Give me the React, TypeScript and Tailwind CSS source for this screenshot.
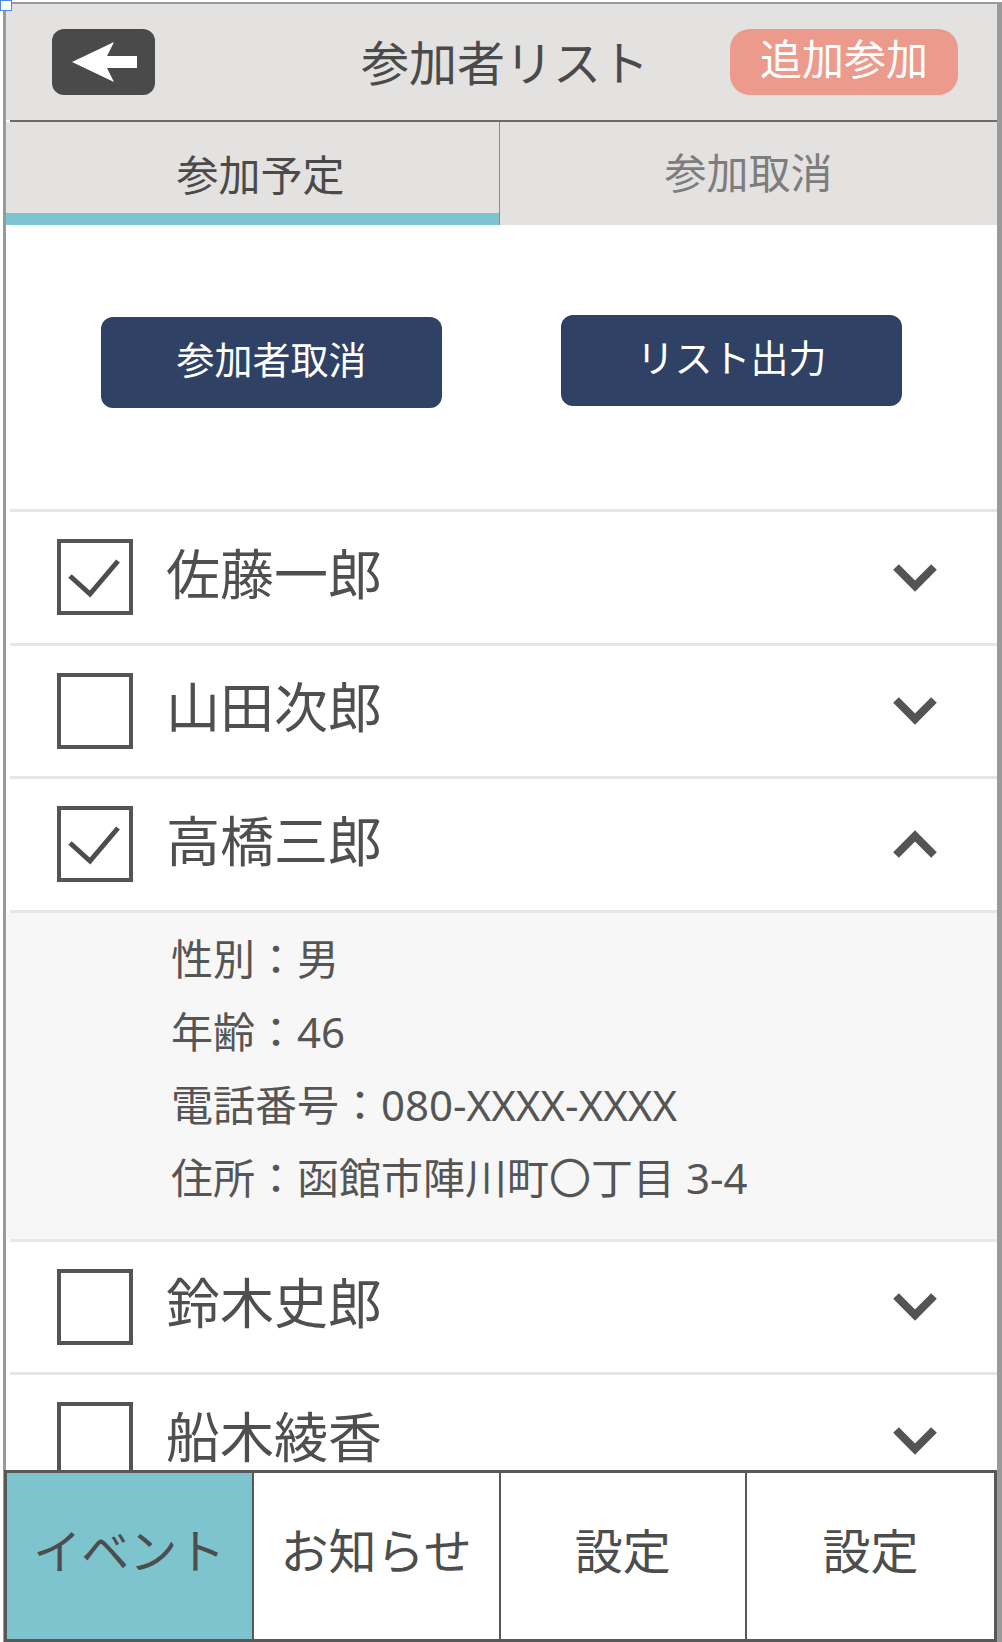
import React from "react";

type Person = { name: string; checked: boolean; open?: boolean };

const people: Person[] = [
  { name: "佐藤一郎", checked: true },
  { name: "山田次郎", checked: false },
  { name: "高橋三郎", checked: true, open: true },
  { name: "鈴木史郎", checked: false },
  { name: "船木綾香", checked: false },
];

function Chevron({ up }: { up?: boolean }) {
  return (
    <svg width="46" height="31" viewBox="0 0 46 31" className="shrink-0">
      <polyline
        points={up ? "4,26 23,7 42,26" : "4,5 23,24 42,5"}
        fill="none"
        stroke="#545454"
        strokeWidth="8"
      />
    </svg>
  );
}

function Checkbox({ checked }: { checked: boolean }) {
  return (
    <div className="w-[76px] h-[76px] shrink-0 border-[4px] border-[#565353]">
      {checked && (
        <svg width="68" height="68" viewBox="0 0 68 68">
          <polyline points="9,33 29,51 57,18" fill="none" stroke="#4d4d4d" strokeWidth="5" />
        </svg>
      )}
    </div>
  );
}

function Row({ p }: { p: Person }) {
  return (
    <>
      <div className="h-[130.5px] shrink-0 flex items-center pl-[51px] pr-[59px]">
        <Checkbox checked={p.checked} />
        <span className="ml-[33px] text-[54px] leading-none text-[#4f4f4f] -mt-[11px]">{p.name}</span>
        <div className="flex-1" />
        <Chevron up={p.open} />
      </div>
      <div className="h-[3px] shrink-0 ml-[4px] bg-[#e6e6e6]" />
      {p.open && (
        <>
          <div className="shrink-0 bg-[#f7f7f7] pl-[165px] pt-[9px] pb-[25px] text-[42px] leading-[73px] text-[#555] font-['Noto_Sans','Noto_Sans_CJK_JP',sans-serif]">
            <div>性別：男</div>
            <div>年齢：46</div>
            <div>電話番号：080-XXXX-XXXX</div>
            <div>住所：函館市陣川町〇丁目 3-4</div>
          </div>
          <div className="h-[3px] shrink-0 ml-[4px] bg-[#e8e8e8]" />
        </>
      )}
    </>
  );
}

export default function App() {
  return (
    <div className="relative w-[1002px] h-[1642px] bg-white overflow-hidden pt-[2px] pl-[3px] font-['Noto_Sans_CJK_JP',sans-serif]">
      <div className="absolute top-0 left-0 w-[12px] h-[11px] border border-[#4f86f7] bg-white" />
      <div className="h-full flex flex-col border-t-2 border-l-[3px] border-r-[5px] border-[#9a9a9a]">
        {/* header */}
        <div className="h-[116px] shrink-0 bg-[#e3e2e0] grid grid-cols-[1fr_auto_1fr] items-center pl-[46px] pr-[39px]">
          <button className="justify-self-start w-[103px] h-[66px] rounded-[12px] bg-[#4a4a4a]">
            <svg width="103" height="66" viewBox="0 0 103 66">
              <polygon points="20,33 62,13 55,27 85,27 85,39 55,39 62,53" fill="#fff" />
            </svg>
          </button>
          <h1 className="text-[48px] leading-none text-[#4a4a4a] -mt-[4px]">参加者リスト</h1>
          <button className="justify-self-end w-[228px] h-[66px] rounded-[20px] bg-[#ec9a8c] text-white text-[42px] leading-none pb-[10px]">
            追加参加
          </button>
        </div>
        <div className="h-[2px] shrink-0 ml-[4px] bg-[#6e6a6a]" />

        {/* tabs */}
        <div className="h-[103px] shrink-0 flex bg-[#e3e2e0]">
          <div className="w-[494px] flex flex-col border-r-[1.5px] border-[#8b8b8b]">
            <div className="flex-1 flex items-center justify-center pt-[10px] pl-[16px] text-[42px] leading-none text-[#4a4a4a]">
              参加予定
            </div>
            <div className="h-[12px] bg-[#7ec4d0]" />
          </div>
          <div className="flex-1 flex items-center justify-center pb-[6px] text-[42px] leading-none text-[#7d7d7d]">
            参加取消
          </div>
        </div>

        {/* content */}
        <div className="flex-1 min-h-0 overflow-hidden flex flex-col bg-white">
          <div className="h-[284px] shrink-0 flex justify-center gap-[119px] pt-[92px]">
            <button className="w-[341px] h-[91px] rounded-[12px] bg-[#2f4266] text-white text-[38px] leading-none pb-[9px]">
              参加者取消
            </button>
            <button className="w-[341px] h-[91px] rounded-[12px] bg-[#2f4266] text-white text-[38px] leading-none -mt-[2px] pb-[9px]">
              リスト出力
            </button>
          </div>
          <div className="h-[3px] shrink-0 ml-[4px] bg-[#e6e6e6]" />
          {people.map((p) => (
            <Row key={p.name} p={p} />
          ))}
        </div>

        {/* bottom nav */}
        <div className="h-[172px] shrink-0 -ml-[2px] grid grid-cols-4 border-[3px] border-[#5a5757] bg-white text-[48px] leading-none text-[#4d4d4d]">
          <div className="flex items-center justify-center pb-[16px] bg-[#7dc4cf] border-r-2 border-[#5a5757]">イベント</div>
          <div className="flex items-center justify-center pb-[16px] border-r-2 border-[#5a5757]">お知らせ</div>
          <div className="flex items-center justify-center pb-[16px] border-r-2 border-[#5a5757]">設定</div>
          <div className="flex items-center justify-center pb-[16px]">設定</div>
        </div>
      </div>
    </div>
  );
}
